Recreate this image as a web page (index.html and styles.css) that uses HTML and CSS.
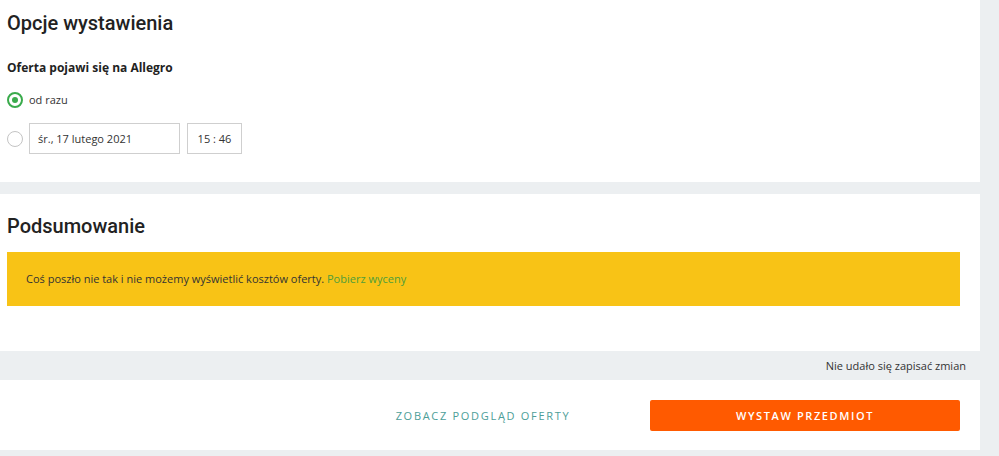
FILE: index.html
```html
<!doctype html>
<html lang="pl">
<head>
<meta charset="utf-8">
<title>Opcje wystawienia</title>
<link rel="stylesheet" href="styles.css">
</head>
<body>
<div class="page">

	<section class="card card-options">
		<h2 class="card-title">Opcje wystawienia</h2>
		<h3 class="field-title">Oferta pojawi się na Allegro</h3>
		<label class="radio-row">
			<span class="radio radio-on"></span>
			<span class="radio-label">od razu</span>
		</label>
		<div class="radio-row radio-row-inputs">
			<span class="radio"></span>
			<span class="field field-date">śr., 17 lutego 2021</span>
			<span class="field field-time">15 : 46</span>
		</div>
	</section>

	<section class="card card-summary">
		<h2 class="card-title">Podsumowanie</h2>
		<div class="alert">
			Coś poszło nie tak i nie możemy wyświetlić kosztów oferty.&nbsp;<a href="#" class="alert-link">Pobierz wyceny</a>
		</div>
	</section>

	<div class="save-status">Nie udało się zapisać zmian</div>

	<section class="card card-actions">
		<a href="#" class="btn btn-preview">Zobacz podgląd oferty</a>
		<a href="#" class="btn btn-submit">Wystaw przedmiot</a>
	</section>

</div>
</body>
</html>
```

FILE: styles.css
```css
body {
	margin: 0;
	background: #eceff1;
	font-family: "Open Sans", sans-serif;
	color: #333;
}
a {
	text-decoration: none;
}
.page {
	width: 980px;
}
.card {
	background: #fff;
	box-sizing: border-box;
}
.card-title {
	margin: 0;
	font-family: Roboto, sans-serif;
	font-weight: 500;
	font-size: 20px;
	line-height: 24px;
	color: #222;
}

/* opcje wystawienia */
.card-options {
	padding: 11px 7px 28px;
	margin-bottom: 12px;
}
.field-title {
	margin: 24px 0 0;
	font-size: 12px;
	line-height: 18px;
	font-weight: 700;
	color: #222;
}
.radio-row {
	display: flex;
	align-items: center;
	margin-top: 15px;
	font-size: 11px;
}
.radio {
	width: 16px;
	height: 16px;
	box-sizing: border-box;
	border: 1px solid #c4c4c4;
	border-radius: 50%;
	margin-right: 6px;
	flex: none;
}
.radio-on {
	border: 2px solid #3aab4c;
	position: relative;
}
.radio-on::after {
	content: "";
	position: absolute;
	left: 3px;
	top: 3px;
	width: 6px;
	height: 6px;
	border-radius: 50%;
	background: #3aab4c;
}
.radio-label {
	line-height: 16px;
}
.field {
	display: flex;
	align-items: center;
	height: 31px;
	box-sizing: border-box;
	border: 1px solid #cfcfcf;
	font-size: 11px;
	color: #333;
}
.field-date {
	width: 151px;
	padding-left: 8px;
}
.field-time {
	width: 55px;
	margin-left: 7px;
	justify-content: center;
}

/* podsumowanie */
.card-summary {
	padding: 20px 20px 45px 7px;
}
.alert {
	display: flex;
	align-items: center;
	height: 54px;
	margin-top: 14px;
	padding-left: 19px;
	background: #f8c316;
	font-size: 11px;
	line-height: 16px;
	color: #333;
}
.alert-link {
	color: #4f9e3a;
}

.save-status {
	height: 29px;
	line-height: 29px;
	padding-right: 14px;
	text-align: right;
	font-size: 11px;
	color: #333;
}

/* przyciski */
.card-actions {
	display: flex;
	justify-content: flex-end;
	align-items: center;
	height: 70px;
	padding-right: 20px;
	gap: 12px;
}
.btn {
	display: flex;
	align-items: center;
	justify-content: center;
	width: 310px;
	height: 31px;
	font-size: 11px;
	letter-spacing: 1.7px;
	text-transform: uppercase;
	border-radius: 2px;
}
.btn-preview {
	color: #4d9e98;
}
.btn-submit {
	background: #ff5a00;
	color: #fff;
	font-weight: 600;
	letter-spacing: 1.6px;
}
```
